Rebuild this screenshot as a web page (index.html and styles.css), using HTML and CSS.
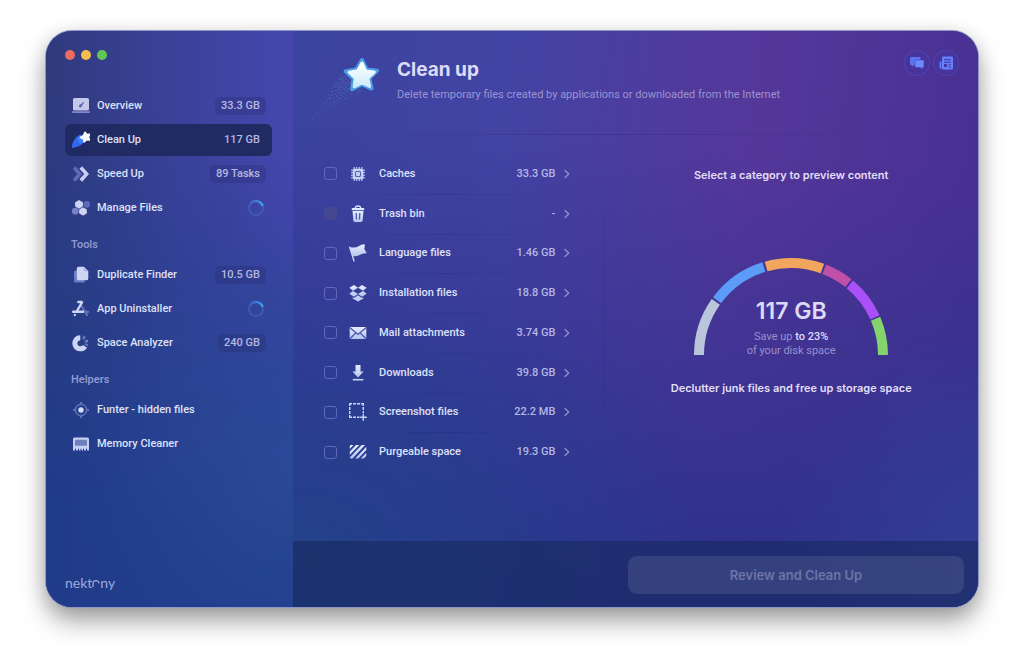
FILE: index.html
```html
<!DOCTYPE html>
<html lang="en">
<head>
<meta charset="utf-8">
<meta name="viewport" content="width=device-width, initial-scale=1">
<title>Clean up</title>
<link rel="stylesheet" href="styles.css">
</head>
<body>
<svg class="defs" aria-hidden="true">
  <defs>
    <linearGradient id="pale" x1="0" y1="0" x2="0" y2="1"><stop offset="0" stop-color="#e6ecff"/><stop offset="1" stop-color="#b4c6ee"/></linearGradient>
    <linearGradient id="ice" x1="0" y1="0" x2="0" y2="1"><stop offset="0" stop-color="#ffffff"/><stop offset="1" stop-color="#cdeafb"/></linearGradient>
    <linearGradient id="sweep" x1="0" y1="0" x2="1" y2="0"><stop offset="0" stop-color="#3f74d8" stop-opacity=".4"/><stop offset="1" stop-color="#43a0f2"/></linearGradient>
    <symbol id="chevron" viewBox="0 0 6 10"><path d="M1 1.500l3.700 3.500L1 8.500" fill="none" stroke="currentColor" stroke-width="1.200" stroke-linecap="round" stroke-linejoin="round"/></symbol>
    <symbol id="spinner" viewBox="0 0 18 18"><circle cx="9" cy="9" r="7" fill="none" stroke="#4d7de0" stroke-opacity=".35" stroke-width="2.200"/><path d="M3.400 4.800A7 7 0 0 1 15.600 6.900" fill="none" stroke="url(#sweep)" stroke-width="2.400"/></symbol>
  </defs>
</svg>
<div class="window">
  <aside class="sidebar">
    <div class="lights">
      <button class="light light-close" aria-label="Close"></button>
      <button class="light light-min" aria-label="Minimize"></button>
      <button class="light light-max" aria-label="Zoom"></button>
    </div>
    <nav class="nav">
      <a class="item" href="#overview">
        <svg class="nav-icon" viewBox="0 0 18 18"><rect x="1" y="1" width="16" height="12.500" rx="1.600" fill="#c5c8ea"/><path d="M0 14.300h18v.6q0 1-1 1H1q-1 0-1-1z" fill="#8289c6"/><path d="M12.700 4.200L9.900 9.100a1.500 1.500 0 1 1-1.700-1.700z" fill="#5c61a6"/></svg>
        <span class="name">Overview</span><span class="badge">33.3 GB</span>
      </a>
      <a class="item item-active" href="#cleanup" aria-current="page">
        <svg class="nav-icon" viewBox="0 0 18 18"><path d="M8.500 3.500C3 6 .5 10.500-.6 17.200 6 16 11 13.500 12.800 10z" fill="#2f68f2"/><path d="M5 8l4-4 4 6-5 3z" fill="#3f80ff"/><path d="M13 1.300l1.700 2.300 3.200-.4-1.600 2.800 1.400 2.900-3.200-.3-2.300 2.400-.8-3.200-3-1.300 2.900-1.700z" fill="#f4f6ff" stroke="#f4f6ff" stroke-width="1.600" stroke-linejoin="round"/></svg>
        <span class="name">Clean Up</span><span class="badge">117 GB</span>
      </a>
      <a class="item" href="#speed">
        <svg class="nav-icon" viewBox="0 0 18 18" fill="none" stroke-width="3.600"><path d="M2.200 2.500L7.700 9l-5.500 6.500" stroke="#6069b4"/><path d="M8.800 2.500L14.600 9l-5.800 6.500" stroke="#c8cdf3"/></svg>
        <span class="name">Speed Up</span><span class="badge">89 Tasks</span>
      </a>
      <a class="item" href="#files">
        <svg class="nav-icon" viewBox="0 0 18 18"><circle cx="14.800" cy="5.300" r="3.400" fill="#6069b6"/><circle cx="3.200" cy="12.200" r="3.400" fill="#7880c4"/><path d="M7 1.500l3.500 2v3.800L7 9.300l-3.500-2V3.500zM11 8.700l3.400 1.900v3.700L11 16.200l-3.400-1.900v-3.700z" fill="#cfd4f6" stroke="#cfd4f6" stroke-width=".8" stroke-linejoin="round"/></svg>
        <span class="name">Manage Files</span><svg class="spin" role="img" aria-label="Scanning"><use href="#spinner"/></svg>
      </a>
      <h2 class="group">Tools</h2>
      <a class="item" href="#duplicates">
        <svg class="nav-icon" viewBox="0 0 18 18"><path d="M4.800 4.500H3.500A1.500 1.500 0 0 0 2 6v9a1.500 1.500 0 0 0 1.500 1.500h8A1.500 1.500 0 0 0 13 15z" fill="#6f7cc1"/><path d="M6.500 .8h5.300L16.300 5.300v7.200a1.700 1.700 0 0 1-1.700 1.700H6.500a1.700 1.700 0 0 1-1.700-1.700V2.500A1.700 1.700 0 0 1 6.500 .8z" fill="#ccd5f4"/><path d="M12 1v3a1.200 1.200 0 0 0 1.200 1.200h3z" fill="#a8b5e2"/></svg>
        <span class="name">Duplicate Finder</span><span class="badge">10.5 GB</span>
      </a>
      <a class="item" href="#uninstaller">
        <svg class="nav-icon" viewBox="0 0 18 18" fill="none" stroke-linecap="round"><path d="M9.800 6.500l5.200 8.500M13.500 11.800h2.700" stroke="#6273bb" stroke-width="2.200"/><path d="M6.300 2h3.500M10 2.500L4.600 11.600M1.200 11.800h9.800" stroke="#ccd5f4" stroke-width="2.400"/><path d="M2.900 14.800l-.2.300" stroke="#ccd5f4" stroke-width="2.200"/></svg>
        <span class="name">App Uninstaller</span><svg class="spin" role="img" aria-label="Scanning"><use href="#spinner"/></svg>
      </a>
      <a class="item" href="#space">
        <svg class="nav-icon" viewBox="0 0 18 18" fill="none"><path d="M8.300 3.800a5.500 5.500 0 1 0 4.700 8.500" stroke="#ccd5f4" stroke-width="5"/><path d="M10.600 3.300a6 6 0 0 1 2.400 1.300" stroke="#6072ba" stroke-width="3.600"/><path d="M14 6.300a6 6 0 0 1 .6 2" stroke="#7483c8" stroke-width="3.600"/><path d="M14.600 9.600a6 6 0 0 1-.8 2" stroke="#6072ba" stroke-width="3.600"/></svg>
        <span class="name">Space Analyzer</span><span class="badge">240 GB</span>
      </a>
      <h2 class="group">Helpers</h2>
      <a class="item" href="#funter">
        <svg class="nav-icon" viewBox="0 0 18 18"><path d="M9 1v3M9 14v3M1 9h3M14 9h3" stroke="#6f82c4" stroke-width="1.600"/><circle cx="9" cy="9" r="5.600" fill="none" stroke="#5a6db2" stroke-width="1.600"/><circle cx="9" cy="9" r="2.700" fill="#d6e0fb"/></svg>
        <span class="name">Funter - hidden files</span>
      </a>
      <a class="item" href="#memory">
        <svg class="nav-icon" viewBox="0 0 18 18"><path d="M2.500 2.500h13a1.500 1.500 0 0 1 1.500 1.500v11.500h-2v-1.800h-1v1.800h-2v-1.800h-1v1.800H9.500v-1.800h-1v1.800H7v-1.800H6v1.800H4v-1.800H3v1.800H1V4a1.500 1.500 0 0 1 1.500-1.500z" fill="#c3cef2"/><rect x="3" y="4.700" width="12" height="6" rx=".6" fill="#6e7fc0"/></svg>
        <span class="name">Memory Cleaner</span>
      </a>
    </nav>
    <div class="brand"><span>nekt</span><svg class="brand-arc" viewBox="0 0 8 9"><path d="M1 8V4.800a3 3 0 0 1 6-.2" fill="none" stroke="currentColor" stroke-width="1.200"/></svg><span>ny</span></div>
  </aside>

  <main class="main">
    <header class="head">
      <svg class="hero" viewBox="0 0 70 66">
        <g fill="none" stroke="#5fa4f2" stroke-linecap="round">
          <path stroke-width="1.100" opacity=".8" d="M36 18h0M34 20h0M37 21h0M32 22h0M35 23h0M39 23h0M30 23h0M33 25h0M37 25h0M28 26h0M31 27h0M35 27h0M40 27h0M26 28h0M29 29h0M33 29h0M37 29h0M27 31h0M31 31h0M35 31h0M40 31h0M24 31h0M29 33h0M33 33h0M38 33h0M25 34h0M27 36h0M31 35h0M36 35h0M22 35h0M29 37h0M33 37h0M24 38h0M26 40h0M30 39h0M21 39h0M23 42h0M28 42h0M19 42h0M45 32h0M43 34h0M48 34h0"/>
          <path stroke-width="1" opacity=".6" d="M38 19h0M33 17h0M30 20h0M28 23h0M38 27h0M42 29h0M25 26h0M23 29h0M21 32h0M20 36h0M18 39h0M34 34h0M41 35h0M38 37h0M35 39h0M32 41h0M30 43h0M26 44h0M23 46h0M21 44h0M17 43h0M16 46h0M19 48h0M25 48h0M28 46h0M14 48h0M17 51h0M21 50h0M34 42h0M40 38h0M46 36h0M50 35h0M31 25h0M29 31h0M36 33h0M27 34h0"/>
          <path stroke-width=".9" opacity=".45" d="M15 43h0M12 47h0M13 51h0M15 53h0M11 53h0M10 50h0M9 55h0M12 56h0M7 54h0M7 58h0M5 57h0M4 60h0M2 63h0M19 53h0M23 51h0M27 50h0M31 47h0M36 43h0M42 40h0M16 37h0M18 33h0M13 40h0M47 38h0M38 41h0"/>
        </g>
        <path d="M51 4l4.700 9.600 10.400 1.200-7.800 7.300 2.300 10.500-9.800-4.500-9.700 5 1.400-10.700-7.800-7.200 10.600-1.700z" fill="#4b9be8" stroke="#4b9be8" stroke-width="4" stroke-linejoin="round"/>
        <path d="M51 7l3.700 8 8.600 1.100-6.400 6 1.700 8.400-7.800-3.700-7.600 4 1.100-8.600-6.300-6 8.700-1.400z" fill="url(#ice)" stroke="url(#ice)" stroke-width="3" stroke-linejoin="round"/>
      </svg>
      <div class="titles">
        <h1 class="title">Clean up</h1>
        <p class="subtitle">Delete temporary files created by applications or downloaded from the Internet</p>
      </div>
      <div class="actions">
        <button class="round" aria-label="Messages"><svg viewBox="0 0 16 16"><path d="M2 2h8.500q1 0 1 1v6q0 1-1 1H5.500L3.500 12v-2H2Q1 10 1 9V3q0-1 1-1z" fill="#5c74f2"/><path d="M7 5h7q1 0 1 1v5.500q0 1-1 1h-.5v2l-2.300-2H7q-1 0-1-1V6q0-1 1-1z" fill="#6c8bff" stroke="#4a3cae" stroke-width=".6"/></svg></button>
        <button class="round" aria-label="News"><svg viewBox="0 0 16 16"><path d="M5 1.500h9q1 0 1 1v11q0 1-1 1H5q-1 0-1-1v-11q0-1 1-1z" fill="#6481fb"/><path d="M2.500 6.500v7" stroke="#6481fb" stroke-width="1.800"/><path d="M6 4.700h7M6 7.200h7M10.500 9.800H13M10.500 12H13" stroke="#4235a4" stroke-width="1"/><path d="M6 9h3v3H6z" fill="#4235a4"/></svg></button>
      </div>
    </header>

    <div class="content">
      <ul class="list">
        <li class="row"><input class="check" type="checkbox" id="c1"><label class="cat" for="c1"><svg class="cat-icon" viewBox="0 0 20 20"><path d="M6.300 3v14M8.800 3v14M11.300 3v14M13.800 3v14M3 6.300h14M3 8.800h14M3 11.300h14M3 13.800h14" stroke="#c3d2f5" stroke-width="1.100"/><rect x="4.800" y="4.800" width="10.500" height="10.500" rx="1" fill="#c3d2f5"/><rect x="7.500" y="7.500" width="5" height="5" rx="1" fill="none" stroke="#5660b4" stroke-width="1.100"/></svg>Caches</label><button class="more">33.3 GB<svg class="chev"><use href="#chevron"/></svg></button></li>
        <li class="row"><input class="check" type="checkbox" id="c2" disabled><label class="cat" for="c2"><svg class="cat-icon" viewBox="0 0 20 20"><path d="M7.300 4Q7.500 2 10 2t2.700 2" fill="none" stroke="#dce5fd" stroke-width="1.300"/><rect x="3.700" y="4" width="12.600" height="2.200" rx=".8" fill="#e1e9ff"/><path d="M4.500 7h11l-.9 9.600q-.1 1.400-1.400 1.400H6.800q-1.300 0-1.400-1.400z" fill="url(#pale)"/><path d="M8.200 9l.3 6.500M11.800 9l-.3 6.500" stroke="#4c58ac" stroke-width="1.300"/></svg>Trash bin</label><button class="more">-<svg class="chev"><use href="#chevron"/></svg></button></li>
        <li class="row"><input class="check" type="checkbox" id="c3"><label class="cat" for="c3"><svg class="cat-icon" viewBox="0 0 20 20"><path d="M1.700 4.200L6 18" stroke="#c7d5f6" stroke-width="1.400" stroke-linecap="round"/><path d="M2 4Q7 5.500 11 3t6-1.300L16.300 6l2.500 4.300Q15 10 11.500 12T4.700 13z" fill="url(#pale)"/></svg>Language files</label><button class="more">1.46 GB<svg class="chev"><use href="#chevron"/></svg></button></li>
        <li class="row"><input class="check" type="checkbox" id="c4"><label class="cat" for="c4"><svg class="cat-icon" viewBox="0 0 20 20"><path d="M6 2l4 2.700-5 3-3.700-3zM14 2l-4 2.700 5 3 3.700-3zM5 8l5 3-4 2.800-4.700-3zM15 8l-5 3 4 2.800 4.700-3z" fill="url(#pale)"/><path d="M10 12.200l4 2.700 1.400-.7v1.400L10 18.500l-5.400-2.900v-1.400l1.400.7z" fill="#bfd0f2"/></svg>Installation files</label><button class="more">18.8 GB<svg class="chev"><use href="#chevron"/></svg></button></li>
        <li class="row"><input class="check" type="checkbox" id="c5"><label class="cat" for="c5"><svg class="cat-icon" viewBox="0 0 20 20"><rect x="1.700" y="4" width="16.600" height="12" rx="1.200" fill="url(#pale)"/><path d="M2 4.800l8 6.700 8-6.700M2.300 15.500l5.500-5.700M17.700 15.500l-5.500-5.700" fill="none" stroke="#454fa6" stroke-width="1.200"/></svg>Mail attachments</label><button class="more">3.74 GB<svg class="chev"><use href="#chevron"/></svg></button></li>
        <li class="row"><input class="check" type="checkbox" id="c6"><label class="cat" for="c6"><svg class="cat-icon" viewBox="0 0 20 20"><path d="M7.500 2h5v6.500h3L10 14.500 4.500 8.500h3z" fill="url(#pale)"/><path d="M4.800 16.700h10.600" stroke="#c5d5f5" stroke-width="1.600"/></svg>Downloads</label><button class="more">39.8 GB<svg class="chev"><use href="#chevron"/></svg></button></li>
        <li class="row"><input class="check" type="checkbox" id="c7"><label class="cat" for="c7"><svg class="cat-icon" viewBox="0 0 20 20" fill="none" stroke="#c9d7f6" stroke-width="1.400"><path d="M1.700 4V1.700H4M5 1.700H8M9 1.700H12M13 1.700h2.300V4M15.300 5V8M15.300 9V11.500M1.700 5V8M1.700 9V12M1.700 13v2.300H4M5 15.300H8M9 15.300H11.500M15.300 12.200v6.600M12.200 15.300h6.600"/></svg>Screenshot files</label><button class="more">22.2 MB<svg class="chev"><use href="#chevron"/></svg></button></li>
        <li class="row"><input class="check" type="checkbox" id="c8"><label class="cat" for="c8"><svg class="cat-icon" viewBox="0 0 20 20"><path d="M1.800 4q0-1 1-1h2.700L1.800 7zM8 3h3.300L1.800 13V9.600zM13.700 3h3.300L4.500 16.500H2.800q-.8 0-1-1zM18.300 4.800v3.300l-8 8.400H7.200zM18.300 10.700v3.200l-2.500 2.600h-3.100z" fill="url(#pale)"/></svg>Purgeable space</label><button class="more">19.3 GB<svg class="chev"><use href="#chevron"/></svg></button></li>
      </ul>

      <section class="preview">
        <p class="note">Select a category to preview content</p>
        <div class="gauge">
          <svg class="arc" viewBox="0 0 196 98" fill="none" stroke-width="10" role="img" aria-label="Junk by category">
            <path d="M6 97a92 92 0 0 1 184 0" pathLength="180" stroke="#b9c5da" stroke-dasharray="35.200 200"/>
            <path d="M6 97a92 92 0 0 1 184 0" pathLength="180" stroke="#5c9bf7" stroke-dasharray="36.200 200" stroke-dashoffset="-36.600"/>
            <path d="M6 97a92 92 0 0 1 184 0" pathLength="180" stroke="#f2a55c" stroke-dasharray="35.800 200" stroke-dashoffset="-74.200"/>
            <path d="M6 97a92 92 0 0 1 184 0" pathLength="180" stroke="#c04fa9" stroke-dasharray="17.400 200" stroke-dashoffset="-111.200"/>
            <path d="M6 97a92 92 0 0 1 184 0" pathLength="180" stroke="#ab4ff8" stroke-dasharray="26 200" stroke-dashoffset="-129.800"/>
            <path d="M6 97a92 92 0 0 1 184 0" pathLength="180" stroke="#84d36c" stroke-dasharray="23.200 200" stroke-dashoffset="-156.800"/>
          </svg>
          <div class="total">
            <strong class="amount">117 GB</strong>
            <p class="save">Save up <b>to 23%</b><br>of your disk space</p>
          </div>
        </div>
        <p class="note">Declutter junk files and free up storage space</p>
      </section>
    </div>

    <footer class="foot"><button class="review" disabled>Review and Clean Up</button></footer>
  </main>
</div>
</body>
</html>
```
FILE: styles.css
```css
* { box-sizing: border-box; margin: 0; padding: 0; }
body {
  min-height: 100vh;
  display: flex;
  padding: 31px 46px 61px;
  background: #fff;
  font-family: Roboto, "Liberation Sans", sans-serif;
  font-size: 11px;
  line-height: 16px;
  color: #dfe1f8;
}
button { font: inherit; color: inherit; background: none; border: 0; }
a { color: inherit; text-decoration: none; }
svg { display: block; flex: none; }
.defs { position: absolute; width: 0; height: 0; }

.window {
  flex: 1;
  display: grid;
  grid-template-columns: 247px minmax(0, 1fr);
  border-radius: 26px;
  overflow: hidden;
  background: #2b3a8c;
  box-shadow: 0 0 0 1px #8d96c6, 0 14px 26px rgba(0, 0, 0, .36), 0 2px 18px rgba(0, 0, 0, .12);
}

.sidebar {
  display: flex;
  flex-direction: column;
  padding: 19px 21px 16px 19px;
  background:
    radial-gradient(ellipse 90% 40% at 100% 75%, rgba(42, 77, 152, .7), rgba(42, 77, 152, 0)),
    linear-gradient(195deg, rgba(30, 62, 140, 0) 18%, rgba(31, 60, 138, .95) 82%),
    linear-gradient(90deg, #2f3a7c, #3a4298 50%, #4547ae);
}
.lights { display: flex; gap: 6px; }
.light { width: 10px; height: 10px; border-radius: 50%; }
.light-close { background: #ee6b60; }
.light-min { background: #f3be4f; }
.light-max { background: #62c655; }

.nav { display: flex; flex-direction: column; margin-top: 30px; }
.item {
  display: flex;
  align-items: center;
  height: 32px;
  padding: 0 6px 0 7px;
  border-radius: 6px;
  font-weight: 500;
}
.item + .item { margin-top: 2px; }
.item-active { background: #212b63; }
.nav-icon { width: 18px; height: 18px; }
.name { flex: 1; margin-left: 7px; }
.badge {
  padding: 1px 6px;
  border-radius: 5px;
  background: rgba(35, 40, 105, .28);
  color: #b5b9e2;
}
.item-active .badge { background: none; }
.spin { width: 18px; height: 18px; margin-right: 1px; }
.group {
  padding: 7px 6px 0;
  font-size: 11px;
  line-height: 28px;
  font-weight: 600;
  color: #8f97cd;
}
.brand {
  display: flex;
  align-items: baseline;
  margin-top: auto;
  font-family: Lato, Inter, sans-serif;
  font-size: 14px;
  color: #9baada;
}
.brand-arc { width: 8px; height: 9px; }

.main {
  display: flex;
  flex-direction: column;
  min-width: 0;
  background:
    radial-gradient(ellipse 60% 50% at 0% 92%, rgba(34, 68, 138, .9), rgba(34, 68, 138, 0)),
    radial-gradient(ellipse 35% 45% at 105% 95%, rgba(50, 68, 150, .8), rgba(50, 64, 150, 0)),
    linear-gradient(185deg, rgba(43, 49, 140, 0) 22%, rgba(43, 49, 140, 1) 92%),
    linear-gradient(98deg, #3a449e, #4343a4 30%, #55379a 62%, #442f90 100%);
}
.head {
  display: flex;
  align-items: flex-start;
  height: 104px;
  padding: 19px 19px 0 18px;
  background: linear-gradient(90deg, transparent 5%, rgba(50, 38, 120, .45) 45%, transparent 95%) bottom / 100% 1px no-repeat;
}
.hero { width: 70px; height: 66px; margin-top: 6px; }
.titles { flex: 1; margin: 8px 0 0 16px; }
.title { font-family: Inter, sans-serif; font-size: 19px; line-height: 24px; font-weight: 700; color: #dcdcf6; }
.subtitle { margin-top: 5px; color: #9c93d0; }
.actions { display: flex; gap: 3px; }
.round {
  display: grid;
  place-items: center;
  width: 26px;
  height: 26px;
  border-radius: 50%;
  border: 1px solid rgba(100, 96, 220, .3);
  background: rgba(60, 60, 180, .25);
}
.round svg { width: 16px; height: 16px; }

.content { flex: 1; display: grid; grid-template-columns: 5fr 6fr; }
.list {
  display: flex;
  flex-direction: column;
  padding: 19px 34px 69px 31px;
  list-style: none;
  background: linear-gradient(180deg, transparent 5%, rgba(50, 38, 120, .4) 45%, transparent 88%) right / 1px 100% no-repeat;
}
.row { flex: 1; display: flex; align-items: center; }
.row + .row { background: linear-gradient(90deg, transparent, rgba(40, 40, 120, .35) 50%, transparent) top / 100% 1px no-repeat; }
.check {
  appearance: none;
  width: 13px;
  height: 13px;
  border: 1px solid #5f69bb;
  border-radius: 3px;
}
.check:disabled { border-color: transparent; background: rgba(78, 76, 140, .6); }
.cat { flex: 1; display: flex; align-items: center; gap: 11px; margin-left: 11px; font-weight: 500; }
.cat-icon { width: 20px; height: 20px; }
.more { display: flex; align-items: center; gap: 9px; font-weight: 500; color: #b6b6e4; }
.chev { width: 6px; height: 10px; color: #9696d6; }

.preview { display: flex; flex-direction: column; align-items: center; padding-top: 32px; text-align: center; }
.note { font-family: Inter, sans-serif; font-size: 11px; font-weight: 600; color: #e2dff6; }
.gauge { display: grid; justify-items: center; margin: 75px 0 22px; }
.gauge > * { grid-area: 1 / 1; }
.arc { width: 196px; height: 98px; }
.total { padding-top: 39px; }
.amount { display: block; font-family: Inter, sans-serif; font-size: 23px; line-height: 28px; font-weight: 600; color: #dcdaf6; }
.save { margin-top: 5px; line-height: 14px; color: #9a90cc; }
.save b { font-weight: 500; color: #dcdaf6; }

.foot { display: flex; justify-content: flex-end; padding: 15px 14px 13px; background: rgba(24, 42, 95, .62); }
.review {
  width: 336px;
  height: 38px;
  border-radius: 9px;
  background: rgba(90, 100, 150, .38);
  font-family: Inter, sans-serif;
  font-size: 13px;
  font-weight: 600;
  color: #6b75a8;
}
```
